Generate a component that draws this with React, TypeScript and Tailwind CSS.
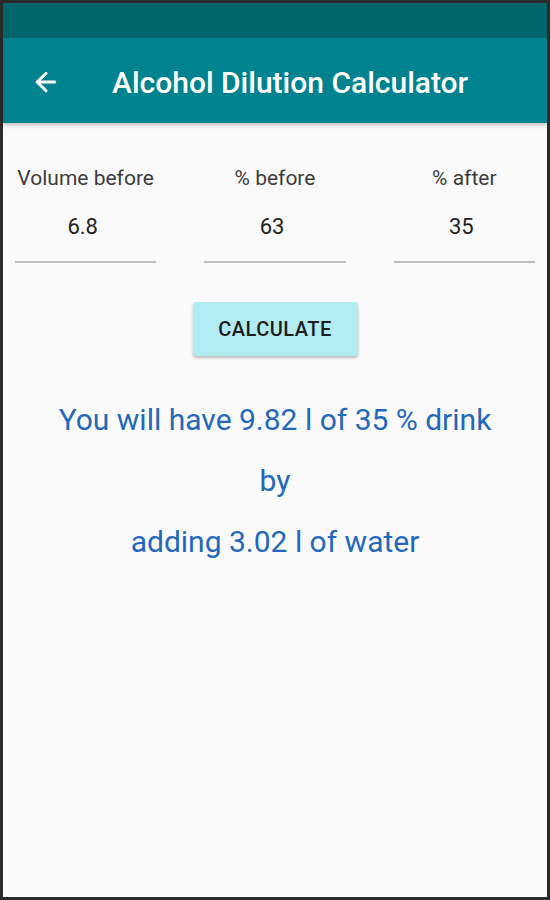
import { ArrowLeft } from 'lucide-react';

const fields = [
  { label: 'Volume before', value: '6.8' },
  { label: '% before', value: '63' },
  { label: '% after', value: '35' },
];

export default function App() {
  return (
    <div
      className="w-[550px] h-[900px] border-[3px] border-[#2b2b2b] bg-[#fafafa] flex flex-col"
      style={{ fontFamily: 'Roboto, "Liberation Sans", sans-serif' }}
    >
      {/* status bar */}
      <div className="h-[35px] bg-[#00666c]" />

      {/* app bar */}
      <div className="h-[85px] bg-[#00838f] flex items-center pt-[3px] px-[28px] shadow-[0_2px_4px_rgba(0,0,0,0.25)] z-10">
        <ArrowLeft className="w-[30px] h-[30px] text-white" strokeWidth={2.4} />
        <h1 className="ml-[51px] text-[30px] font-medium text-white">Alcohol Dilution Calculator</h1>
      </div>

      <div className="flex-1 flex flex-col items-center">
        <div className="w-full grid grid-cols-3 gap-[48px] px-[12px] pt-[42px]">
          {fields.map((f) => (
            <div key={f.label} className="flex flex-col items-center">
              <p className="text-[21px] leading-[26px] text-[#3d3d3d] whitespace-nowrap">{f.label}</p>
              <p className="mt-[21px] pr-[6px] text-[22px] leading-[30px] text-[#222]">{f.value}</p>
              <div className="mt-[19px] w-full h-[2px] bg-[#bdbdbd]" />
            </div>
          ))}
        </div>

        <button className="mt-[39px] w-[165px] h-[54px] rounded-[3px] bg-[#b2ebf2] text-[20px] font-medium tracking-[0.5px] text-[#1d1d1d] shadow-[0_2px_3px_rgba(0,0,0,0.25)]">
          CALCULATE
        </button>

        <div className="mt-[33px] flex flex-col items-center text-[30px] leading-[61px] text-[#2368bd]">
          <p>You will have 9.82 l of 35 % drink</p>
          <p>by</p>
          <p>adding 3.02 l of water</p>
        </div>
      </div>
    </div>
  );
}
